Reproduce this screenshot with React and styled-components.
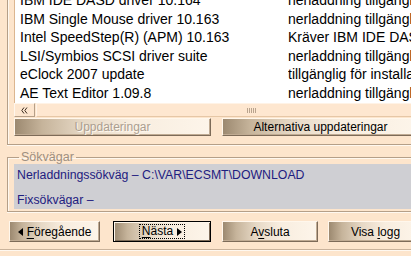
import React from 'react';
import styled, { createGlobalStyle } from 'styled-components';

const Global = createGlobalStyle`
  html, body { margin: 0; padding: 0; background: #fde5cc; overflow: hidden; }
  body {
    width: 411px; height: 256px;
    font-family: "Liberation Sans", Arial, sans-serif;
    font-size: 12px; color: #000;
  }
`;

const Page = styled.div`
  width: 411px;
  height: 256px;
  overflow: hidden;
  display: flex;
  flex-direction: column;
`;

const TopGroup = styled.div`
  box-sizing: border-box;
  margin-left: 7px;
  width: 440px;
  height: 145px;
  flex: none;
  border-left: 1px solid #b59f88;
  border-bottom: 1px solid #b59f88;
  box-shadow: inset 1px 0 0 #fff8ef, 0 1px 0 #fff8ef;
  padding-left: 6px;
  display: flex;
  flex-direction: column;
`;

const List = styled.div`
  height: 103px;
  flex: none;
  background: #fff;
  border-left: 1px solid #dcb690;
  overflow: hidden;
  display: flex;
  flex-direction: column;
  font-size: 14px;
`;

const Row = styled.div`
  display: flex;
  height: 18.5px;
  line-height: 18px;
  flex: none;
  white-space: nowrap;
  &:first-child { margin-top: -9px; }
`;

const NameCell = styled.div`
  width: 273px;
  padding-left: 5px;
  box-sizing: border-box;
  overflow: hidden;
`;

const StatusCell = styled.div`
  flex: 1;
  overflow: hidden;
`;

const ScrollBar = styled.div`
  display: flex;
  height: 14px;
  flex: none;
  background: #fde5cc;
`;

const ArrowBtn = styled.div`
  width: 21px;
  box-sizing: border-box;
  border-top: 1px solid #fff6ec;
  border-left: 1px solid #fff6ec;
  border-right: 1px solid #b59f88;
  border-bottom: 1px solid #b59f88;
  background: #fde6cf;
  display: flex;
  align-items: center;
  justify-content: center;
`;

const Thumb = styled.div`
  flex: 1;
  box-sizing: border-box;
  margin-left: 1px;
  border-top: 1px solid #fff3e6;
  border-left: 1px solid #fff3e6;
  border-bottom: 1px solid #e6c7a6;
  background: #fee7d0;
  display: flex;
  align-items: center;
  padding-left: 210px;
`;

const ButtonRow = styled.div`
  display: flex;
  gap: 11px;
  margin-top: 1px;
  flex: none;
`;

const Button = styled.div`
  box-sizing: border-box;
  width: ${p => p.$w}px;
  height: ${p => p.$h}px;
  flex: none;
  display: flex;
  align-items: center;
  justify-content: center;
  gap: 4px;
  white-space: nowrap;
  font-size: 12px;
  color: ${p => (p.$disabled ? '#ab9e90' : '#000')};
  text-shadow: ${p => (p.$disabled ? '1px 1px 0 #fff8ee' : 'none')};
  background: linear-gradient(90deg, #9c8970 0%, #c6b49b 14%, #e6d8c5 35%, #f8eddf 60%, #fdf5ea 100%);
  border: 1px solid;
  border-color: ${p => (p.$default ? '#000' : '#fff7ec #7d6b58 #7d6b58 #fff7ec')};
  box-shadow: ${p =>
    p.$default
      ? 'inset 1px 1px 0 #fff7ec, inset -1px -1px 0 #7d6b58'
      : 'inset -1px -1px 0 #c0ab93'};
`;

const Focus = styled.span`
  display: inline-flex;
  align-items: center;
  gap: 4px;
  outline: 1px dotted #000;
  outline-offset: 0;
  padding: 0 2px;
  line-height: 13px;
`;

const U = styled.span`
  text-decoration: underline;
  text-underline-offset: 2px;
`;

const Fieldset = styled.fieldset`
  box-sizing: border-box;
  margin: 5px 0 0 7px;
  width: 440px;
  flex: none;
  padding: 0 0 2px 6px;
  border: none;
  border-left: 1px solid #b59f88;
  border-top: 1px solid #b59f88;
  border-bottom: 1px solid #b59f88;
  box-shadow: inset 1px 1px 0 #fff8ef, 0 1px 0 #fff8ef;
  min-inline-size: 0;
`;

const Legend = styled.legend`
  padding: 0 2px;
  margin-left: 5px;
  color: #9e8f80;
  font-size: 12.5px;
  line-height: 14px;
`;

const PathPanel = styled.div`
  height: 45px;
  background: #cfcfd3;
  padding: 2px 0 0 3px;
  box-sizing: border-box;
  display: flex;
  flex-direction: column;
  gap: 7px;
  color: #1e2080;
  font-size: 12.3px;
`;

const PathLine = styled.div`
  height: 18px;
  line-height: 18px;
  white-space: nowrap;
`;

const NavRow = styled.div`
  display: flex;
  margin: 9px 0 0 9px;
  flex: none;
`;

const NavSlot = styled.div`
  margin-left: ${p => p.$ml}px;
  flex: none;
`;

const Separator = styled.div`
  margin-top: 7px;
  height: 1px;
  flex: none;
  background: #c9b29a;
  box-shadow: 0 1px 0 #fff8ef;
`;

const Tri = ({ dir }) => (
  <svg width="5" height="8" viewBox="0 0 5 8">
    {dir === 'left' ? <path d="M5 0 L0 4 L5 8 Z" fill="#000" /> : <path d="M0 0 L5 4 L0 8 Z" fill="#000" />}
  </svg>
);

const DoubleChevron = () => (
  <svg width="7" height="7" viewBox="0 0 7 7">
    <path d="M3 0.5 L0.8 3.5 L3 6.5 M6 0.5 L3.8 3.5 L6 6.5" fill="none" stroke="#3a2c20" strokeWidth="1" />
  </svg>
);

const Grip = () => (
  <svg width="10" height="5" viewBox="0 0 10 5">
    {[0, 2, 4, 6, 8].map(x => (
      <rect key={x} x={x} y="0" width="1" height="5" fill="#b9a48e" />
    ))}
  </svg>
);

const rows = [
  ['IBM IDE DASD driver 10.164', 'nerladdning tillgänglig'],
  ['IBM Single Mouse driver 10.163', 'nerladdning tillgänglig'],
  ['Intel SpeedStep(R) (APM) 10.163', 'Kräver IBM IDE DASD driver'],
  ['LSI/Symbios SCSI driver suite', 'nerladdning tillgänglig'],
  ['eClock 2007 update', 'tillgänglig för installation'],
  ['AE Text Editor 1.09.8', 'nerladdning tillgänglig'],
  ['Visa loggfil', 'nerladdning tillgänglig'],
];

export default function App() {
  return (
    <Page>
      <Global />
      <TopGroup>
        <List>
          {rows.map(([n, s], i) => (
            <Row key={i}>
              <NameCell>{n}</NameCell>
              <StatusCell>{s}</StatusCell>
            </Row>
          ))}
        </List>
        <ScrollBar>
          <ArrowBtn><DoubleChevron /></ArrowBtn>
          <Thumb><Grip /></Thumb>
        </ScrollBar>
        <ButtonRow>
          <Button $w={197} $h={18} $disabled>Uppdateringar</Button>
          <Button $w={197} $h={18}>Alternativa uppdateringar</Button>
        </ButtonRow>
      </TopGroup>
      <Fieldset>
        <Legend>Sökvägar</Legend>
        <PathPanel>
          <PathLine>Nerladdningssökväg – C:\VAR\ECSMT\DOWNLOAD</PathLine>
          <PathLine>Fixsökvägar –</PathLine>
        </PathPanel>
      </Fieldset>
      <NavRow>
        <NavSlot $ml={0}>
          <Button $w={91} $h={21}><Tri dir="left" /><span><U>F</U>öregående</span></Button>
        </NavSlot>
        <NavSlot $ml={13}>
          <Button $w={98} $h={21} $default>
            <Focus><span><U>N</U>ästa</span><Tri dir="right" /></Focus>
          </Button>
        </NavSlot>
        <NavSlot $ml={11}>
          <Button $w={96} $h={21}><span>A<U>v</U>sluta</span></Button>
        </NavSlot>
        <NavSlot $ml={10}>
          <Button $w={95} $h={21}><span>Visa <U>l</U>ogg</span></Button>
        </NavSlot>
      </NavRow>
      <Separator />
    </Page>
  );
}
